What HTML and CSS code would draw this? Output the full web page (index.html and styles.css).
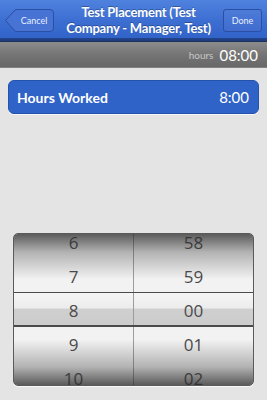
FILE: index.html
```html
<!DOCTYPE html>
<html>
<head>
<meta charset="utf-8">
<link rel="stylesheet" href="styles.css">
</head>
<body>
<div class="screen">
  <header class="navbar">
    <button class="btn back">
      <svg class="back-shape" width="49" height="23" viewBox="0 0 49 23"><path d="M0.5 11.5 L10 1 Q10.5 0.5 11.5 0.5 L45 0.5 Q48.5 0.5 48.5 4 L48.5 19 Q48.5 22.5 45 22.5 L11.5 22.5 Q10.5 22.5 10 22 Z" fill="#4673d4" stroke="#2a4fa3" stroke-width="1"/></svg>
      <span class="btn-label">Cancel</span>
    </button>
    <div class="title">Test Placement (Test<br>Company - Manager, Test)</div>
    <button class="btn done"><span class="btn-label">Done</span></button>
  </header>
  <div class="summary">
    <span class="summary-label">hours</span>
    <span class="summary-value">08:00</span>
  </div>
  <main class="content">
    <div class="row-selected">
      <span>Hours Worked</span>
      <span>8:00</span>
    </div>
    <div class="picker">
      <div class="selection"></div>
      <div class="wheel">
        <div class="list">
          <div class="item">6</div>
          <div class="item">7</div>
          <div class="item">8</div>
          <div class="item">9</div>
          <div class="item">10</div>
        </div>
      </div>
      <div class="wheel">
        <div class="list">
          <div class="item">58</div>
          <div class="item">59</div>
          <div class="item">00</div>
          <div class="item">01</div>
          <div class="item">02</div>
        </div>
      </div>
      <div class="shade"></div>
      <div class="selection-lines"></div>
    </div>
  </main>
</div>
</body>
</html>
```
FILE: styles.css
```css
* { box-sizing: border-box; }
html, body { margin: 0; padding: 0; }
body {
  width: 267px;
  height: 400px;
  overflow: hidden;
  background: #e4e4e4;
  font-family: Lato, "Open Sans", "Liberation Sans", sans-serif;
}
.screen { display: flex; flex-direction: column; height: 400px; }

.navbar {
  height: 42px;
  flex: none;
  display: flex;
  align-items: center;
  justify-content: space-between;
  padding: 0 5px 0 5px;
  background: linear-gradient(#4f82de 0%, #3d6fd3 50%, #3263c8 92%, #23448c 93%, #1f3b7a 100%);
  border-bottom: 1px solid #1c3360;
}
.btn {
  position: relative;
  border: 0;
  padding: 0;
  background: none;
  color: #e8eefc;
  font-family: Lato, "Liberation Sans", sans-serif;
  font-size: 9px;
  height: 23px;
  display: flex;
  align-items: center;
  justify-content: center;
}
.back { width: 49px; margin-top: -1px; }
.back-shape { position: absolute; left: 0; top: 0; }
.back .btn-label { position: relative; padding-left: 9px; }
.done {
  width: 39px;
  margin-top: -1px;
  background: linear-gradient(#4d7bd8, #3f6cce);
  border: 1px solid #2a4fa3;
  border-radius: 3px;
}
.title {
  flex: 1;
  text-align: center;
  color: #fff;
  font-weight: bold;
  font-size: 13px;
  line-height: 16px;
  margin-top: -1px;
  letter-spacing: -0.2px;
  text-shadow: 0 -1px 0 rgba(0,0,0,0.3);
}

.summary {
  height: 26px;
  flex: none;
  display: flex;
  align-items: center;
  justify-content: flex-end;
  gap: 6px;
  padding: 0 9px 1px 0;
  background: linear-gradient(#8c8c8c, #747474 50%, #686868 96%, #9a9a9a 100%);
}
.summary-label { color: #c9c9c9; font-size: 10px; }
.summary-value { color: #fff; font-size: 15px; }

.content {
  display: flex;
  flex-direction: column;
  padding: 12px 8px 0 8px;
}
.row-selected {
  height: 34px;
  display: flex;
  align-items: center;
  justify-content: space-between;
  padding: 0 9px 0 8px;
  background: #2f63c8;
  border: 1px solid #2552ad;
  border-radius: 6px;
  color: #fff;
  font-size: 14px;
  font-weight: bold;
  box-shadow: 0 1px 0 #f6f6f6;
}
.row-selected span:last-child { font-weight: normal; font-size: 15px; }

.picker {
  position: relative;
  margin: 119px 5px 0 5px;
  height: 153px;
  display: flex;
  border: 1px solid #5a5a5a;
  border-radius: 5px;
  overflow: hidden;
  background: #f2f2f2;
  box-shadow: 0 1px 1px rgba(255,255,255,0.8);
}
.wheel { flex: 1; overflow: hidden; position: relative; z-index: 1; }
.wheel + .wheel { border-left: 1px solid #9d9d9d; }
.list { margin-top: -9px; }
.item {
  height: 34px;
  display: flex;
  align-items: center;
  justify-content: center;
  color: #4a4a4a;
  font-size: 17px;
  font-family: "Open Sans", Lato, "Liberation Sans", sans-serif;
}
.shade {
  position: absolute;
  inset: 0;
  z-index: 2;
  background: linear-gradient(rgba(40,40,40,0.75) 0%, rgba(60,60,60,0.35) 12%, rgba(255,255,255,0) 30%, rgba(255,255,255,0) 70%, rgba(60,60,60,0.35) 88%, rgba(40,40,40,0.75) 100%);
  pointer-events: none;
}
.selection {
  position: absolute;
  left: 0;
  right: 0;
  top: 58px;
  height: 35px;
  z-index: 0;
  background: linear-gradient(#f6f6f6 0%, #ececec 45%, #cfcfcf 50%, #cccccc 100%);
}
.selection-lines {
  position: absolute;
  left: -1px;
  right: -1px;
  top: 58px;
  height: 35px;
  z-index: 3;
  border-top: 1px solid #4a4a4a;
  border-bottom: 2px solid #4a4a4a;
}
```
